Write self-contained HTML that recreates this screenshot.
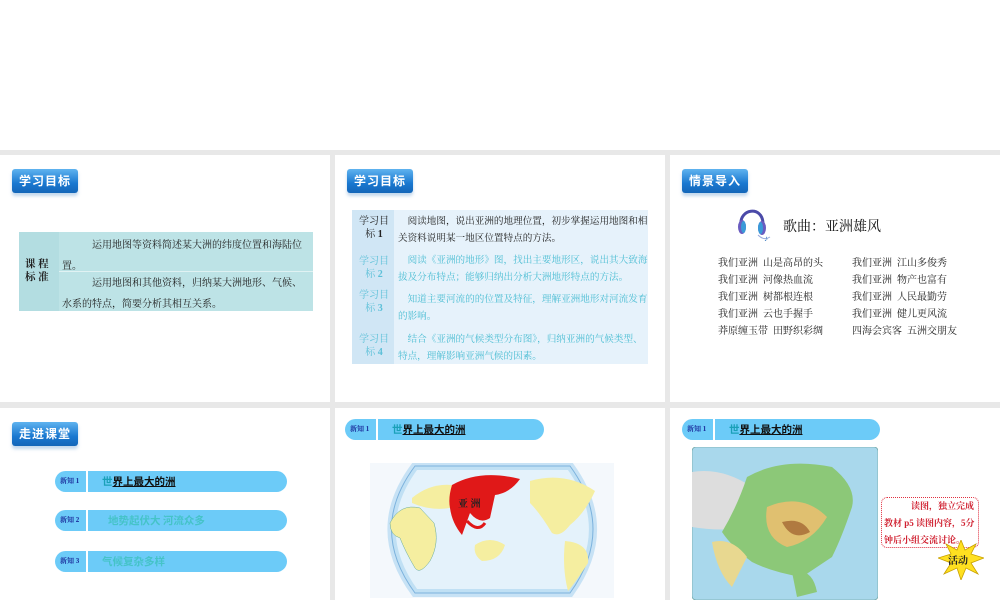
<!DOCTYPE html>
<html><head><meta charset="utf-8"><style>
*{margin:0;padding:0;box-sizing:border-box}
body{width:1000px;height:600px;overflow:hidden;background:#fff;font-family:"Liberation Serif","Noto Serif CJK SC","Noto Sans CJK SC",serif;position:relative}
.gray{position:absolute;left:0;top:150px;width:1000px;height:450px;background:#e8e8e8}
.s{position:absolute;background:#fff;overflow:hidden}
.badge{position:absolute;left:12px;top:14px;width:66px;height:24px;border-radius:3px;background:linear-gradient(#5fb3ef,#1a78d0 60%,#1466b8);color:#fff;font-weight:bold;font-size:12px;font-family:"Noto Sans CJK SC",sans-serif;text-align:center;line-height:24px;letter-spacing:1px;box-shadow:0 3px 3px rgba(80,140,200,.35)}
.t{position:absolute;font-size:10px;line-height:17px;color:#222}
.pill{position:absolute;height:21px;}
.pill .l{position:absolute;left:0;top:0;width:31px;height:21px;background:#6ccbf8;border-radius:11px 0 0 11px;font-size:7px;color:#1a2a9a;line-height:21px;padding-left:5px;font-weight:bold}
.pill .r{position:absolute;left:33px;top:0;right:0;height:21px;background:#6ccbf8;border-radius:0 11px 11px 0;font-size:10.5px;line-height:21px;padding-left:14px;font-weight:bold;font-family:"Noto Sans CJK SC",sans-serif}
.ly{position:absolute;font-size:10px;line-height:17px;color:#222;white-space:pre}
</style></head><body>
<div class="gray"></div>

<!-- slide 1 -->
<div class="s" style="left:0;top:155px;width:330px;height:247px">
<div class="badge">学习目标</div>
<div style="position:absolute;left:19px;top:77px;width:294px;height:79px;background:#bde3e6"></div>
<div style="position:absolute;left:19px;top:77px;width:40px;height:79px;background:#b3dde1"></div>
<div style="position:absolute;left:59px;top:116px;width:254px;height:1px;background:#e0f2f3"></div>
<div class="t" style="left:25px;top:103px;font-size:10.5px;line-height:13px;font-weight:bold">课 程<br>标 准</div>
<div class="t" style="left:62px;top:80px;width:250px;font-size:10px;line-height:21px">　　　运用地图等资料简述某大洲的纬度位置和海陆位置。</div>
<div class="t" style="left:62px;top:118px;width:242px;font-size:10px;line-height:21px">　　　运用地图和其他资料，归纳某大洲地形、气候、水系的特点，简要分析其相互关系。</div>
</div>

<!-- slide 2 -->
<div class="s" style="left:335px;top:155px;width:330px;height:247px">
<div class="badge">学习目标</div>
<div style="position:absolute;left:17px;top:55px;width:296px;height:154px;background:#e6f2fb"></div>
<div style="position:absolute;left:17px;top:55px;width:42px;height:154px;background:#d0e6f5"></div>
<div class="t" style="left:18px;top:60px;width:42px;text-align:center;font-size:10px;line-height:13px">学习目<br>标 <b>1</b></div>
<div class="t" style="left:18px;top:100px;width:42px;text-align:center;font-size:10px;line-height:13px;color:#5cc0d8">学习目<br>标 <b>2</b></div>
<div class="t" style="left:18px;top:134px;width:42px;text-align:center;font-size:10px;line-height:13px;color:#5cc0d8">学习目<br>标 <b>3</b></div>
<div class="t" style="left:18px;top:178px;width:42px;text-align:center;font-size:10px;line-height:13px;color:#5cc0d8">学习目<br>标 <b>4</b></div>
<div class="t" style="left:63px;top:58px;width:252px;font-size:9.6px;line-height:17px">　阅读地图，说出亚洲的地理位置，初步掌握运用地图和相关资料说明某一地区位置特点的方法。</div>
<div class="t" style="left:63px;top:97px;width:252px;font-size:9.6px;line-height:17px;color:#4bbdd3">　阅读《亚洲的地形》图，找出主要地形区，说出其大致海拔及分布特点；能够归纳出分析大洲地形特点的方法。</div>
<div class="t" style="left:63px;top:136px;width:252px;font-size:9.6px;line-height:17px;color:#4bbdd3">　知道主要河流的的位置及特征，理解亚洲地形对河流发育的影响。</div>
<div class="t" style="left:63px;top:176px;width:252px;font-size:9.6px;line-height:17px;color:#4bbdd3">　结合《亚洲的气候类型分布图》，归纳亚洲的气候类型、特点，理解影响亚洲气候的因素。</div>
</div>

<!-- slide 3 -->
<div class="s" style="left:670px;top:155px;width:330px;height:247px">
<div class="badge" style="left:12px">情景导入</div>
<svg style="position:absolute;left:66px;top:48px" width="40" height="42" viewBox="0 0 40 42">
<path d="M5 22 C3 6 26 2 27 20" fill="none" stroke="#4b4aa8" stroke-width="3"/>
<ellipse cx="6" cy="24" rx="4" ry="7" fill="#6a5cc0"/><ellipse cx="7.5" cy="24" rx="2.5" ry="6" fill="#3a9ad8"/>
<ellipse cx="26" cy="25" rx="4" ry="7" fill="#6a5cc0"/><ellipse cx="24.5" cy="25" rx="2.5" ry="6" fill="#3a9ad8"/>
<path d="M22 32 Q28 38 34 34" fill="none" stroke="#9ad" stroke-width="1"/>
<text x="28" y="38" font-size="8" fill="#3a7ac0">♪</text>
</svg>
<div style="position:absolute;left:113px;top:61px;font-size:14px;color:#111">歌曲：亚洲雄风</div>
<div class="ly" style="left:48px;top:100px">我们亚洲  山是高昂的头
我们亚洲  河像热血流
我们亚洲  树都根连根
我们亚洲  云也手握手
莽原缠玉带  田野织彩绸</div>
<div class="ly" style="left:182px;top:100px">我们亚洲  江山多俊秀
我们亚洲  物产也富有
我们亚洲  人民最勤劳
我们亚洲  健儿更风流
四海会宾客  五洲交朋友</div>
</div>

<!-- slide 4 -->
<div class="s" style="left:0;top:408px;width:330px;height:192px">
<div class="badge" style="top:14px">走进课堂</div>
<div class="pill" style="left:55px;top:63px;width:232px"><div class="l">新知 1</div><div class="r"><span style="color:#1aa0b8">世</span><span style="color:#111;text-decoration:underline">界上最大的洲</span></div></div>
<div class="pill" style="left:55px;top:102px;width:232px"><div class="l">新知 2</div><div class="r" style="color:#45c3c8;padding-left:20px">地势起伏大  河流众多</div></div>
<div class="pill" style="left:55px;top:143px;width:232px"><div class="l">新知 3</div><div class="r" style="color:#45c3c8">气候复杂多样</div></div>
</div>

<!-- slide 5 -->
<div class="s" style="left:335px;top:408px;width:330px;height:192px">
<div class="pill" style="left:10px;top:11px;width:199px"><div class="l">新知 1</div><div class="r"><span style="color:#1aa0b8">世</span><span style="color:#111;text-decoration:underline">界上最大的洲</span></div></div>
<svg style="position:absolute;left:35px;top:55px" width="244" height="135" viewBox="0 0 244 135">
<rect width="244" height="135" fill="#f4f8fc"/>
<path d="M45 3 L200 3 Q246 66 200 130 L45 130 Q-2 66 45 3Z" fill="#e4f2fb" stroke="#3a80c0" stroke-width="1"/>
<path d="M45 3 L200 3 Q246 66 200 130 L45 130 Q-2 66 45 3Z" fill="none" stroke="#a8d4f0" stroke-width="8" opacity=".6"/>
<path d="M20 60 Q30 40 50 45 L64 60 Q70 80 60 98 Q50 112 45 105 Q35 88 30 75 Q20 72 20 60Z" fill="#f5eea0" stroke="#6a9" stroke-width=".5"/>
<path d="M42 35 Q60 20 82 22 L80 45 Q60 48 42 40Z" fill="#f5eea0"/>
<path d="M82 22 Q110 6 150 16 Q140 30 125 32 L120 55 Q110 62 100 50 L92 72 Q82 60 80 45 Q78 35 82 22Z" fill="#e01818"/>
<path d="M97 58 Q108 70 115 60" fill="none" stroke="#e01818" stroke-width="3"/>
<text x="88" y="44" font-size="10" font-weight="bold" fill="#222">亚 洲</text>
<path d="M105 82 Q120 72 135 82 Q130 98 112 98 Q103 92 105 82Z" fill="#f5eea0"/>
<path d="M160 18 Q195 8 225 28 Q215 50 200 62 Q190 75 182 70 Q170 50 160 40Z" fill="#f5eea0"/>
<path d="M195 78 Q220 80 218 100 Q205 120 198 128 Q192 105 195 78Z" fill="#f5eea0"/>
</svg>
</div>

<!-- slide 6 -->
<div class="s" style="left:670px;top:408px;width:330px;height:192px">
<div class="pill" style="left:12px;top:11px;width:198px"><div class="l">新知 1</div><div class="r"><span style="color:#1aa0b8">世</span><span style="color:#111;text-decoration:underline">界上最大的洲</span></div></div>
<svg style="position:absolute;left:22px;top:39px" width="186" height="153" viewBox="0 0 186 153">
<rect x="0" y="0" width="186" height="153" rx="4" fill="#a9d8ec" stroke="#7aa" stroke-width=".8"/>
<path d="M0 25 Q30 20 60 40 L60 80 Q30 85 0 80Z" fill="#ddd"/>
<path d="M55 30 Q90 10 140 20 Q165 40 160 60 Q150 90 140 110 L110 130 Q80 125 60 115 Q40 100 30 85 Q45 60 55 30Z" fill="#8cc878"/>
<path d="M75 60 Q110 45 135 70 Q120 95 95 100 Q70 90 75 60Z" fill="#e0c070"/>
<path d="M90 75 Q110 70 118 85 Q100 95 90 75Z" fill="#b07a40"/>
<path d="M20 95 Q40 90 55 110 L40 140 Q25 125 20 95Z" fill="#e8d890"/>
<path d="M100 125 Q120 120 125 145 L105 150Z" fill="#8cc878"/>
</svg>
<div style="position:absolute;left:211px;top:89px;width:98px;height:51px;border:1.5px dotted #e03040;border-radius:6px;background:#fff;font-size:9px;line-height:17px;color:#d02030;font-weight:bold;padding-left:2px">　　　读图，独立完成教材 p5 读图内容，5分钟后小组交流讨论。</div>
<svg style="position:absolute;left:268px;top:132px" width="46" height="40" viewBox="0 0 46 40"><polygon points="23,0 27,10 38,4 33,14 46,18 33,23 40,34 28,28 23,40 19,28 6,34 13,23 0,18 13,14 8,4 19,10" fill="#ffe020" stroke="#c8a000" stroke-width=".8"/><text x="10" y="24" font-size="10" font-weight="bold" fill="#222">活动</text></svg>
</div>
</body></html>
